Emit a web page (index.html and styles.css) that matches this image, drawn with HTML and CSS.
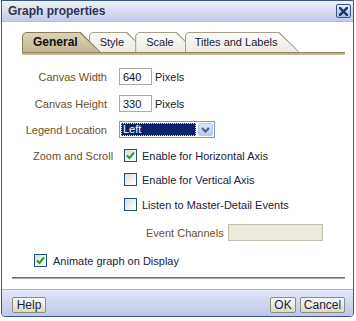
FILE: index.html
```html
<!DOCTYPE html>
<html lang="en">
<head>
  <meta charset="UTF-8" />
  <title>Graph properties</title>
  <link rel="stylesheet" href="styles.css">
</head>
<body>
  <div class="dialog">
    <div class="titlebar">
      <span class="title">Graph properties</span>
      <div class="close-btn" title="Close">
        <svg width="9" height="9" viewBox="0 0 9 9"><path d="M1 1 L8 8 M8 1 L1 8" stroke="#1c3468" stroke-width="2.4" stroke-linecap="square"/></svg>
      </div>
    </div>

    <div class="content">
      <div class="tabs">
        <div class="tab active"><span>General</span></div>
        <div class="tab t2"><span>Style</span></div>
        <div class="tab t3"><span>Scale</span></div>
        <div class="tab t4"><span>Titles and Labels</span></div>
      </div>
      <div class="tabline"></div>

      <div class="form">
        <div class="row">
          <div class="label">Canvas Width</div>
          <div class="field"><div class="textbox">640</div><span class="unit">Pixels</span></div>
        </div>
        <div class="row">
          <div class="label">Canvas Height</div>
          <div class="field"><div class="textbox">330</div><span class="unit">Pixels</span></div>
        </div>
        <div class="row legend-row">
          <div class="label">Legend Location</div>
          <div class="field">
            <div class="select">
              <span class="value">Left</span>
              <span class="arrow"><svg width="9" height="6" viewBox="0 0 9 6"><path d="M1 1 L4.5 4.5 L8 1" fill="none" stroke="#4a5f8c" stroke-width="2"/></svg></span>
            </div>
          </div>
        </div>
        <div class="row check-row">
          <div class="label group-label">Zoom and Scroll</div>
          <div class="field">
            <span class="checkbox checked"><svg width="11" height="11" viewBox="0 0 11 11"><path d="M2 5.5 L4.5 8 L9 2.5" fill="none" stroke="#21a121" stroke-width="2"/></svg></span>
            <span class="check-text">Enable for Horizontal Axis</span>
          </div>
        </div>
        <div class="row check-row">
          <div class="label"></div>
          <div class="field">
            <span class="checkbox"></span>
            <span class="check-text">Enable for Vertical Axis</span>
          </div>
        </div>
        <div class="row check-row last-check">
          <div class="label"></div>
          <div class="field">
            <span class="checkbox"></span>
            <span class="check-text">Listen to Master-Detail Events</span>
          </div>
        </div>
        <div class="row event-row">
          <div class="label"></div>
          <div class="field event-field">
            <span class="event-label">Event Channels</span>
            <div class="textbox disabled"></div>
          </div>
        </div>
        <div class="animate-row">
          <span class="checkbox checked"><svg width="11" height="11" viewBox="0 0 11 11"><path d="M2 5.5 L4.5 8 L9 2.5" fill="none" stroke="#21a121" stroke-width="2"/></svg></span>
          <span class="check-text">Animate graph on Display</span>
        </div>
      </div>

      <div class="separator"></div>
    </div>

    <div class="footer">
      <div class="btn help">Help</div>
      <div class="spacer"></div>
      <div class="btn ok">OK</div>
      <div class="btn cancel">Cancel</div>
    </div>
  </div>
</body>
</html>
```

FILE: styles.css
```css
* {
  box-sizing: border-box;
}

body {
  margin: 0;
  background: #fff;
  font-family: "Liberation Sans", Arial, sans-serif;
  font-size: 11px;
  color: #222;
}

.dialog {
  margin-left: 1px;
  width: 353px;
  height: 317px;
  border: 1px solid #3b5585;
  border-radius: 0 0 4px 4px;
  display: flex;
  flex-direction: column;
  overflow: hidden;
  background: #fff;
}

/* title bar */
.titlebar {
  height: 21px;
  flex: none;
  border-bottom: 1px solid #b3bbdc;
  background: linear-gradient(#eff1fb, #c4cae8);
  display: flex;
  align-items: center;
  justify-content: space-between;
  padding: 0 2px 0 6px;
}

.title {
  font-size: 12px;
  font-weight: bold;
  color: #30364a;
}

.close-btn {
  width: 15px;
  height: 14px;
  border: 1px solid #3a5590;
  border-radius: 2px;
  background: linear-gradient(#e3e9f8, #a9bbe4);
  display: flex;
  align-items: center;
  justify-content: center;
}

/* body */
.content {
  flex: 1;
  padding: 10px 8px 0 10px;
}

.tabs {
  display: flex;
  height: 20px;
  padding-left: 10px;
}

.tab {
  position: relative;
  height: 20px;
  line-height: 20px;
  padding: 0 23px 0 11px;
  margin-right: -12px;
  color: #1a1a3a;
  background: #a39d89;
  white-space: nowrap;
  clip-path: polygon(0 4px, 1px 2px, 2px 1px, 4px 0, calc(100% - 20px) 0, 100% 100%, 0 100%);
}

.tab::before {
  content: "";
  position: absolute;
  top: 1px;
  left: 1px;
  right: 1px;
  bottom: 0;
  background: linear-gradient(#fbfbf8, #ecebe3);
  clip-path: polygon(0 3px, 1px 1px, 3px 0, calc(100% - 20px) 0, 100% 100%, 0 100%);
}

.tab span {
  position: relative;
}

.tab.active {
  z-index: 5;
  background: #8a7c5a;
  font-weight: bold;
  font-size: 12px;
  color: #111;
}

.tab.active::before {
  background: linear-gradient(#dcd3b9, #c2b694);
}

.tab.t2 { z-index: 1; }
.tab.t3 { z-index: 2; }
.tab.t4 { z-index: 3; padding-right: 22px; padding-left: 10px; }

.tabline {
  height: 3px;
  margin-left: 10px;
  border-top: 1px solid #8e8263;
  background: #c2b796;
}

/* form */
.form {
  margin-top: 13px;
}

.row {
  display: flex;
  align-items: center;
  gap: 12px;
  height: 17px;
}

.row + .row {
  margin-top: 10px;
}

.row.legend-row {
  margin-top: 9px;
}

.row.check-row {
  height: 13px;
  margin-top: 11px;
}

.row.last-check {
  margin-top: 12px;
}

.row.event-row {
  margin-top: 13px;
}

.label {
  width: 95px;
  flex: none;
  text-align: right;
  white-space: nowrap;
  color: #6b5029;
}

.group-label {
  text-align: left;
  padding-left: 21px;
}

.field {
  display: flex;
  align-items: center;
  white-space: nowrap;
}

.textbox {
  width: 33px;
  height: 17px;
  border: 1px solid #a5acb2;
  background: #fff;
  padding: 1px 0 0 3px;
  line-height: 14px;
  color: #111;
}

.textbox.disabled {
  width: 95px;
  background: #ecead9;
  border-color: #c3c0b2;
}

.unit {
  margin-left: 3px;
  color: #222;
}

.select {
  width: 96px;
  height: 17px;
  border: 1px solid #7f9db9;
  padding: 1px;
  display: flex;
  background: #fff;
}

.select .value {
  flex: 1;
  background: #0a246a;
  color: #fff;
  line-height: 13px;
  padding-left: 2px;
  outline: 1px dotted #e6e1c8;
  outline-offset: -1px;
}

.select .arrow {
  width: 15px;
  margin-left: 2px;
  border: 1px solid #b9c9ee;
  border-radius: 2px;
  background: linear-gradient(#dde7fc, #b6c9f3);
  display: flex;
  align-items: center;
  justify-content: center;
}

.checkbox {
  width: 13px;
  height: 13px;
  flex: none;
  margin-left: 5px;
  border: 1px solid #1c5180;
  background: linear-gradient(135deg, #dcdcd6, #f6f6f3 70%, #fff);
  display: flex;
  align-items: center;
  justify-content: center;
}

.check-text {
  margin-left: 5px;
  color: #22223e;
}

.event-field {
  padding-left: 27px;
}

.event-label {
  width: 82px;
  color: #6b5029;
}

.animate-row {
  display: flex;
  align-items: center;
  height: 13px;
  margin-top: 13px;
  padding-left: 17px;
}

.animate-row .check-text {
  margin-left: 6px;
}

.separator {
  margin-top: 10px;
  height: 2px;
  border-top: 1px solid #6f6f6f;
  background: #a8a8a8;
}

/* footer */
.footer {
  height: 27px;
  flex: none;
  border-top: 1px solid #a8b4d8;
  background: linear-gradient(#e2e7f8, #bcc6e7);
  display: flex;
  align-items: flex-start;
  gap: 4px;
  padding: 7px 8px 0 10px;
}

.spacer {
  flex: 1;
}

.btn {
  height: 16px;
  line-height: 14px;
  border: 1px solid #8f8c7b;
  border-radius: 2px;
  background: linear-gradient(#fbfbf5, #dcd9ca);
  color: #1e1e4a;
  font-size: 12px;
  text-align: center;
}

.btn.help { width: 34px; }
.btn.ok { width: 26px; }
.btn.cancel { width: 45px; }
```
